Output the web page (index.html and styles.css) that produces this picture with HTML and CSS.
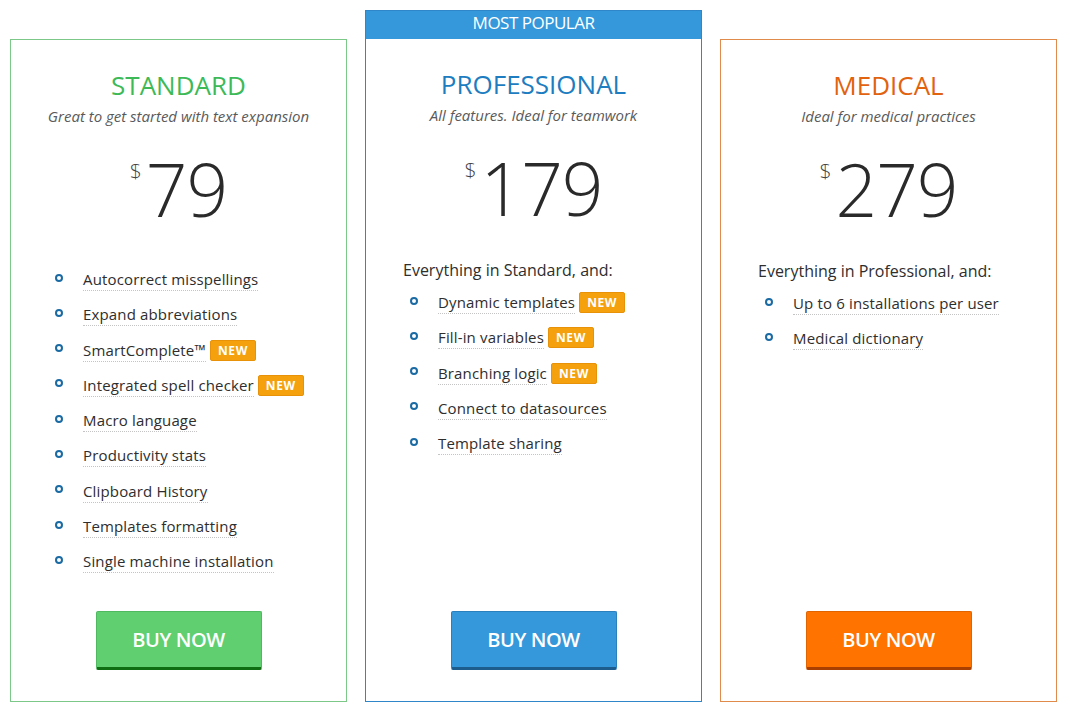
FILE: index.html
```html
<!DOCTYPE html>
<html lang="en">
<head>
<meta charset="utf-8">
<title>Pricing</title>
<link rel="stylesheet" href="styles.css">
</head>
<body>
<div class="plans">
  <section class="card card-standard">
    <div class="card-body">
      <h2 class="title">STANDARD</h2>
      <p class="sub">Great to get started with text expansion</p>
      <div class="price"><span class="cur">$</span><span class="amt">79</span></div>
      <div class="features">
        <ul class="list no-intro">
          <li><span class="dot"></span><span class="txt">Autocorrect misspellings</span></li>
          <li><span class="dot"></span><span class="txt">Expand abbreviations</span></li>
          <li><span class="dot"></span><span class="txt">SmartComplete™</span><span class="badge">NEW</span></li>
          <li><span class="dot"></span><span class="txt">Integrated spell checker</span><span class="badge">NEW</span></li>
          <li><span class="dot"></span><span class="txt">Macro language</span></li>
          <li><span class="dot"></span><span class="txt">Productivity stats</span></li>
          <li><span class="dot"></span><span class="txt">Clipboard History</span></li>
          <li><span class="dot"></span><span class="txt">Templates formatting</span></li>
          <li><span class="dot"></span><span class="txt">Single machine installation</span></li>
        </ul>
      </div>
      <a class="btn" href="#">BUY NOW</a>
    </div>
  </section>

  <section class="card card-pro">
    <div class="ribbon">MOST POPULAR</div>
    <div class="card-body">
      <h2 class="title">PROFESSIONAL</h2>
      <p class="sub">All features. Ideal for teamwork</p>
      <div class="price"><span class="cur">$</span><span class="amt">179</span></div>
      <div class="features">
        <p class="intro">Everything in Standard, and:</p>
        <ul class="list">
          <li><span class="dot"></span><span class="txt">Dynamic templates</span><span class="badge">NEW</span></li>
          <li><span class="dot"></span><span class="txt">Fill-in variables</span><span class="badge">NEW</span></li>
          <li><span class="dot"></span><span class="txt">Branching logic</span><span class="badge">NEW</span></li>
          <li><span class="dot"></span><span class="txt">Connect to datasources</span></li>
          <li><span class="dot"></span><span class="txt">Template sharing</span></li>
        </ul>
      </div>
      <a class="btn" href="#">BUY NOW</a>
    </div>
  </section>

  <section class="card card-medical">
    <div class="card-body">
      <h2 class="title">MEDICAL</h2>
      <p class="sub">Ideal for medical practices</p>
      <div class="price"><span class="cur">$</span><span class="amt">279</span></div>
      <div class="features">
        <p class="intro">Everything in Professional, and:</p>
        <ul class="list">
          <li><span class="dot"></span><span class="txt">Up to 6 installations per user</span></li>
          <li><span class="dot"></span><span class="txt">Medical dictionary</span></li>
        </ul>
      </div>
      <a class="btn" href="#">BUY NOW</a>
    </div>
  </section>
</div>
</body>
</html>
```

FILE: styles.css
```css
* { box-sizing: border-box; }

html, body {
  margin: 0;
  padding: 0;
  background: #ffffff;
}

body {
  font-family: "Open Sans", "Noto Sans", "Liberation Sans", sans-serif;
  color: #333333;
}

.plans {
  display: flex;
  gap: 18px;
  height: 712px;
  padding: 10px 13px 10px 10px;
}

.card {
  flex: 0 0 337px;
  display: flex;
  flex-direction: column;
  border: 1px solid #7cc888;
  margin-top: 29px;
  background: #fff;
}

.card-pro {
  margin-top: 0;
  border-color: #2f86c9;
}

.card-medical {
  border-color: #e08a4c;
}

.ribbon {
  height: 28px;
  background: #3498db;
  color: #fff;
  text-align: center;
  font-size: 17px;
  line-height: 24px;
  letter-spacing: -0.5px;
}

.card-body {
  flex: 1;
  display: flex;
  flex-direction: column;
  padding-top: 30px;
}

.title {
  margin: 0;
  text-align: center;
  font-size: 26px;
  line-height: 31px;
  font-weight: 400;
}

.card-standard .title { color: #3dba57; }
.card-pro .title { color: #1d7dc0; }
.card-medical .title { color: #e1620f; }

.sub {
  margin: 5px 0 0;
  text-align: center;
  font-size: 15px;
  line-height: 20px;
  font-style: italic;
  font-weight: 400;
  color: #5a5a5a;
}

.price {
  margin-top: 27px;
  display: flex;
  justify-content: center;
  align-items: flex-start;
  color: #2a2a2a;
  font-weight: 300;
}

.cur {
  font-size: 21px;
  line-height: 21px;
  margin-top: 8px;
  margin-right: 4px;
  color: #444;
}

.amt {
  font-size: 73px;
  line-height: 72px;
  letter-spacing: -1px;
}

.features {
  margin-top: 35px;
  padding-left: 37px;
}

.intro {
  margin: 0;
  font-size: 16px;
  line-height: 22px;
  font-weight: 400;
  color: #2e2e2e;
}

.list {
  list-style: none;
  margin: 11px 0 0;
  padding: 0 0 0 7px;
}

.list.no-intro {
  margin-top: 9px;
}

.list li {
  display: flex;
  align-items: center;
  height: 22px;
  margin-bottom: 13.3px;
}

.dot {
  flex: 0 0 8px;
  width: 8px;
  height: 8px;
  border: 2px solid #1a6aa3;
  border-radius: 50%;
  margin-right: 20px;
  margin-top: -5px;
}

.txt {
  display: inline-block;
  font-size: 15px;
  line-height: 21px;
  letter-spacing: 0.15px;
  color: #2e2e2e;
  border-bottom: 1px dotted #c4c4c4;
}

.badge {
  display: inline-block;
  margin-left: 4px;
  margin-top: -1px;
  height: 21px;
  padding: 0 7px;
  background: #f5a00d;
  border: 1px solid #e8920a;
  border-radius: 2px;
  color: #fff;
  font-size: 12px;
  line-height: 19px;
  font-weight: 700;
  letter-spacing: 0.6px;
}

.btn {
  margin: auto auto 31px;
  display: block;
  width: 166px;
  height: 59px;
  text-align: center;
  text-decoration: none;
  color: #fff;
  font-size: 20px;
  font-weight: 600;
  line-height: 55px;
  letter-spacing: -0.4px;
  border-radius: 2px;
}

.card-standard .btn {
  background: #60cf70;
  border: 1px solid #4fb95f;
  border-bottom: 3px solid #0f6e12;
}

.card-pro .btn {
  background: #3498db;
  border: 1px solid #2a80bd;
  border-bottom: 3px solid #1c5d8e;
}

.card-medical .btn {
  background: #ff7300;
  border: 1px solid #e06400;
  border-bottom: 3px solid #a93f00;
}
```
